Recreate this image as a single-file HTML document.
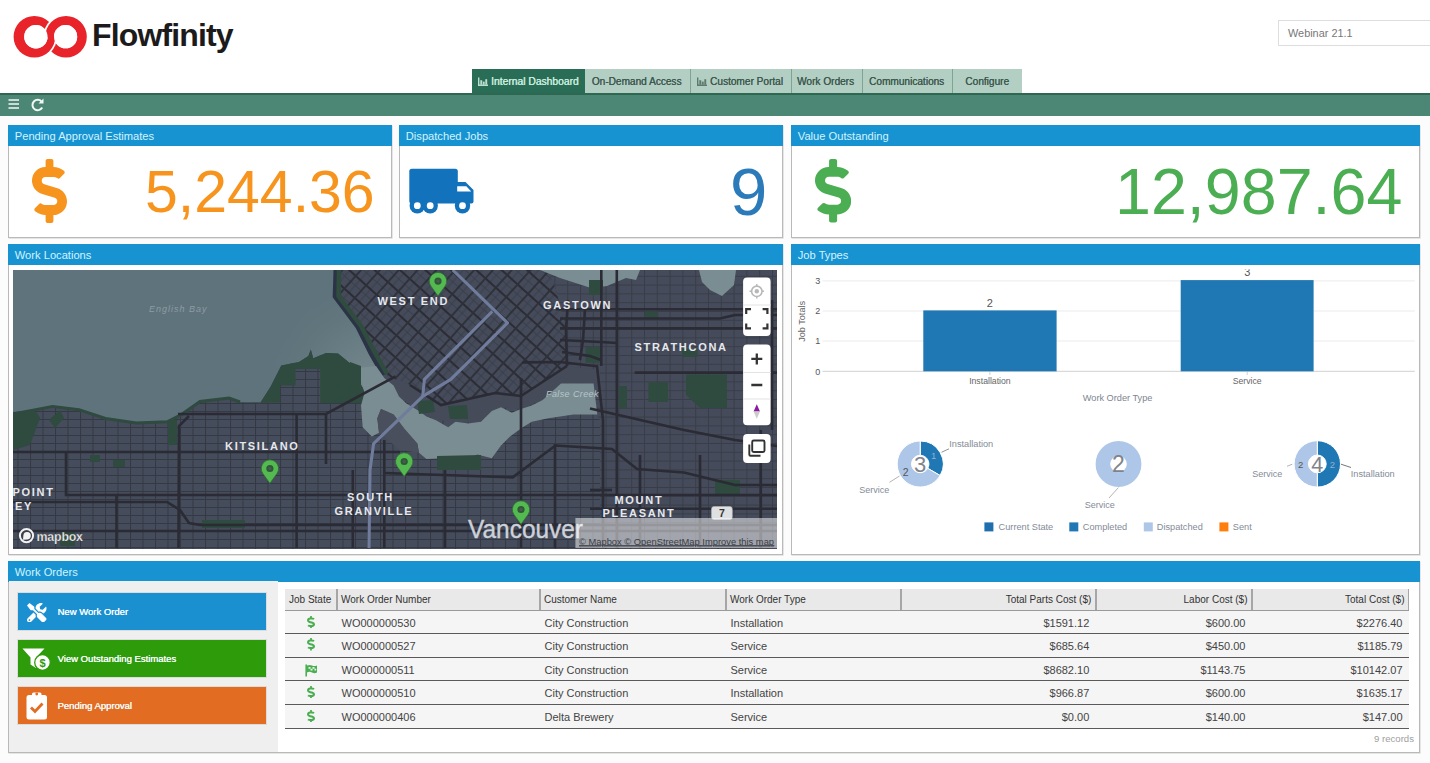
<!DOCTYPE html>
<html><head><meta charset="utf-8">
<style>
*{box-sizing:border-box;margin:0;padding:0}
html,body{width:1430px;height:763px;overflow:hidden;background:#fcfcfc;font-family:"Liberation Sans",sans-serif;position:relative}
.abs{position:absolute}
#hdr{position:absolute;left:0;top:0;width:1430px;height:93px;background:#fff}
.tab{position:absolute;top:69px;height:24px;background:#b3cfc4;border-left:1px solid #7ea493}
.tab.act{background:#2a6d57;border-left:none}
.tt{position:absolute;top:70px;line-height:24px;font-size:10.1px;color:#3d5a4f;text-shadow:0.25px 0 0 #3d5a4f;white-space:nowrap}
#bar{position:absolute;left:0;top:93px;width:1430px;height:23px;background:#4c8775;border-top:2px solid #2e6853}
.panel{position:absolute;background:#fff;border:1px solid #b9b9b9;box-shadow:0.6px 0.6px 0 #d6d6d6}
.ph{position:absolute;left:-1px;right:-1px;top:-1px;height:21px;background:#1893d2;color:#d2f3ff;font-size:11.15px;line-height:20px;padding-top:1px;padding-left:6.8px;white-space:nowrap}
.num{position:absolute;line-height:1;white-space:nowrap}
.btn{position:absolute;left:18px;width:248px;height:37px;box-shadow:0 0 0 1px #dcdcdc}
.btn span{position:absolute;left:39.5px;top:0;line-height:37px;font-size:9.5px;color:#f4fbff;text-shadow:0.15px 0 0 #fff;white-space:nowrap}
.th{position:absolute;top:589px;line-height:21px;font-size:10px;color:#333;white-space:nowrap}
.td{position:absolute;line-height:23.5px;font-size:11px;color:#444;white-space:nowrap}
.cl{position:absolute;font-size:9.1px;color:#666;white-space:nowrap;line-height:1}
</style></head><body>
<div id="hdr">
  <svg class="abs" style="left:0;top:0" width="100" height="70" viewBox="0 0 100 70">
    <defs>
      <mask id="mT" maskUnits="userSpaceOnUse" x="0" y="0" width="100" height="70"><rect width="100" height="70" fill="#fff"/><circle cx="66" cy="36.7" r="22.6" fill="#000"/><rect y="36" width="100" height="40" fill="#fff"/></mask>
      <mask id="mB" maskUnits="userSpaceOnUse" x="0" y="0" width="100" height="70"><rect width="100" height="70" fill="#fff"/><circle cx="34.4" cy="36.7" r="22.6" fill="#000"/><rect y="0" width="100" height="37.4" fill="#fff"/></mask>
    </defs>
    <path mask="url(#mT)" fill="#e8232a" fill-rule="evenodd" d="M13.6 36.7a20.8 20.8 0 1 0 41.6 0a20.8 20.8 0 1 0 -41.6 0ZM24.2 36.7a11.7 11.7 0 1 0 23.4 0a11.7 11.7 0 1 0 -23.4 0Z"/>
    <path mask="url(#mB)" fill="#e8232a" fill-rule="evenodd" d="M45.2 36.7a20.8 20.8 0 1 0 41.6 0a20.8 20.8 0 1 0 -41.6 0ZM54 36.7a11.6 11.6 0 1 0 23.2 0a11.6 11.6 0 1 0 -23.2 0Z"/>
    <circle cx="35.9" cy="36.7" r="11.7" fill="#fff"/><circle cx="65.6" cy="36.7" r="11.6" fill="#fff"/>
  </svg>
  <div class="abs" style="left:92px;top:17px;font-size:32px;font-weight:bold;color:#1c1a1b;letter-spacing:-0.85px;line-height:37px">Flowfinity</div>
  <div class="abs" style="left:1278px;top:20px;width:160px;height:26px;border:1px solid #ddd;background:#fff;font-size:10.9px;color:#777;line-height:24px;padding-left:9px">Webinar 21.1</div>
  <div class="tab act" style="left:472px;width:113px"></div>
  <div class="tab" style="left:585px;width:105px;border-left:none"></div>
  <div class="tab" style="left:690px;width:101px"></div>
  <div class="tab" style="left:791px;width:71px"></div>
  <div class="tab" style="left:862px;width:90px"></div>
  <div class="tab" style="left:952px;width:70px"></div>
  <svg class="abs" style="left:478px;top:76.5px" width="10" height="9" viewBox="0 0 10 9"><path d="M0.7 0.5V8.3H10" fill="none" stroke="#b9e0cf" stroke-width="1.4"/><rect x="2.3" y="3.2" width="1.9" height="4.5" fill="#b9e0cf"/><rect x="4.8" y="4.6" width="1.9" height="3.1" fill="#b9e0cf"/><rect x="7.3" y="2.2" width="1.9" height="5.5" fill="#b9e0cf"/></svg>
  <svg class="abs" style="left:696.5px;top:76.5px" width="10" height="9" viewBox="0 0 10 9"><path d="M0.7 0.5V8.3H10" fill="none" stroke="#5d7a6e" stroke-width="1.4"/><rect x="2.3" y="3.2" width="1.9" height="4.5" fill="#5d7a6e"/><rect x="4.8" y="4.6" width="1.9" height="3.1" fill="#5d7a6e"/><rect x="7.3" y="2.2" width="1.9" height="5.5" fill="#5d7a6e"/></svg>
  <span class="tt" style="left:491px;color:#c9ecdd;font-size:10.3px;text-shadow:0.35px 0 0 #c9ecdd">Internal Dashboard</span>
  <span class="tt" style="left:591.7px">On-Demand Access</span>
  <span class="tt" style="left:710px">Customer Portal</span>
  <span class="tt" style="left:797px">Work Orders</span>
  <span class="tt" style="left:869px">Communications</span>
  <span class="tt" style="left:965.3px">Configure</span>
</div>
<div id="bar"></div>
<svg class="abs" style="left:8px;top:98px" width="40" height="14" viewBox="0 0 40 14">
  <g stroke="#f2f7f4" stroke-width="1.6"><path d="M0.5 2H11M0.5 6H11M0.5 10H11"/></g>
  <path d="M33.6 3.6A5.2 5.2 0 1 0 34.2 9.6" fill="none" stroke="#f2f7f4" stroke-width="2"/>
  <path d="M35.5 0.6V5.6H30.5Z" fill="#f2f7f4"/>
</svg>
<div class="panel" style="left:8px;top:125px;width:384px;height:113px"><div class="ph">Pending Approval Estimates</div></div>
<div class="panel" style="left:399px;top:125px;width:384px;height:113px"><div class="ph">Dispatched Jobs</div></div>
<div class="panel" style="left:791px;top:125px;width:629px;height:113px"><div class="ph">Value Outstanding</div></div>
<svg class="abs" style="left:31.5px;top:159.3px" width="35" height="64" viewBox="0 0 288 512" preserveAspectRatio="none"><path fill="#f7941d" d="M209.2 233.4l-108-31.6C88.7 198.2 80 186.5 80 173.5c0-16.3 13.2-29.5 29.5-29.5h66.3c12.2 0 24.2 3.7 34.2 10.5 6.1 4.1 14.3 3.1 19.5-2l34.8-34c7.1-6.9 6.1-18.4-1.8-24.5C238 74.8 207.4 64.1 176 64V16c0-8.8-7.2-16-16-16h-32c-8.8 0-16 7.2-16 16v48h-2.5C45.8 64-5.4 118.7.5 183.6c4.2 46.1 39.4 83.6 83.8 96.6l102.5 30c12.5 3.7 21.2 15.3 21.2 28.3 0 16.3-13.2 29.5-29.5 29.5h-66.3C100 368 88 364.3 78 357.5c-6.1-4.1-14.3-3.1-19.5 2l-34.8 34c-7.1 6.9-6.1 18.4 1.8 24.5 24.5 19.2 55.1 29.9 86.5 30v48c0 8.8 7.2 16 16 16h32c8.8 0 16-7.2 16-16v-48.2c46.6-.9 90.3-28.6 105.7-72.7 21.5-61.6-14.6-124.8-72.5-141.7z"/></svg>
<div class="num" style="left:145px;top:162.5px;font-size:59px;color:#f7941d">5,244.36</div>
<svg class="abs" style="left:404px;top:162px" width="80" height="60" viewBox="0 0 80 60">
<g fill="#1272bc">
<rect x="5.3" y="6.8" width="48.5" height="34.6" rx="2.5"/>
<path d="M52 20.1H61.5L69.5 28V39.5Q69.5 41.4 67.6 41.4H52Z"/>
<circle cx="13.3" cy="43.7" r="7.7"/><circle cx="26.2" cy="43.7" r="7.7"/><circle cx="58.5" cy="43.7" r="7.7"/>
</g>
<g fill="#fff"><path d="M53.2 24.3H62.3L67.2 29.6H53.2Z"/>
<circle cx="13.3" cy="43.7" r="3.4"/><circle cx="26.2" cy="43.7" r="3.4"/><circle cx="58.5" cy="43.7" r="3.4"/></g>
</svg>
<div class="num" style="left:730px;top:157.5px;font-size:67px;color:#2b7bba">9</div>
<svg class="abs" style="left:815.2px;top:159.4px" width="36.2" height="63.5" viewBox="0 0 288 512" preserveAspectRatio="none"><path fill="#4cae52" d="M209.2 233.4l-108-31.6C88.7 198.2 80 186.5 80 173.5c0-16.3 13.2-29.5 29.5-29.5h66.3c12.2 0 24.2 3.7 34.2 10.5 6.1 4.1 14.3 3.1 19.5-2l34.8-34c7.1-6.9 6.1-18.4-1.8-24.5C238 74.8 207.4 64.1 176 64V16c0-8.8-7.2-16-16-16h-32c-8.8 0-16 7.2-16 16v48h-2.5C45.8 64-5.4 118.7.5 183.6c4.2 46.1 39.4 83.6 83.8 96.6l102.5 30c12.5 3.7 21.2 15.3 21.2 28.3 0 16.3-13.2 29.5-29.5 29.5h-66.3C100 368 88 364.3 78 357.5c-6.1-4.1-14.3-3.1-19.5 2l-34.8 34c-7.1 6.9-6.1 18.4 1.8 24.5 24.5 19.2 55.1 29.9 86.5 30v48c0 8.8 7.2 16 16 16h32c8.8 0 16-7.2 16-16v-48.2c46.6-.9 90.3-28.6 105.7-72.7 21.5-61.6-14.6-124.8-72.5-141.7z"/></svg>
<div class="num" style="left:1115px;top:159.5px;font-size:64.6px;color:#4cae52">12,987.64</div>
<div class="panel" style="left:8px;top:244px;width:775px;height:311px"><div class="ph">Work Locations</div></div>
<svg class="abs" style="left:13px;top:270px" width="764" height="279" viewBox="13 270 764 279">
<defs>
<pattern id="gS" patternUnits="userSpaceOnUse" x="5" y="3" width="12.5" height="8"><rect width="12.5" height="8" fill="#454c5b"/><path d="M0 0.5H12.5M0.5 0V8" stroke="#353944" stroke-width="1"/></pattern>
<pattern id="gD" patternUnits="userSpaceOnUse" width="14" height="17" patternTransform="rotate(42)"><rect width="14" height="17" fill="#454b5a"/><path d="M0 8.5H14M7 0V17" stroke="#3a3e4a" stroke-width="0.9"/><path d="M0 1H14" stroke="#2b2c35" stroke-width="2.1"/><path d="M1 0V17" stroke="#2e3039" stroke-width="1.9"/></pattern>
<pattern id="gE" patternUnits="userSpaceOnUse" x="4" y="3" width="12.8" height="8.8"><rect width="12.8" height="8.8" fill="#454b5a"/><path d="M0 0.5H12.8M0.5 0V8.8" stroke="#393d49" stroke-width="1"/></pattern>
<radialGradient id="wg" gradientUnits="userSpaceOnUse" cx="378" cy="392" r="110"><stop offset="0" stop-color="#798c91"/><stop offset="0.3" stop-color="#6e8288"/><stop offset="0.75" stop-color="#62767e"/><stop offset="1" stop-color="#5f737c"/></radialGradient>
</defs>
<rect x="13" y="270" width="764" height="279" fill="url(#gS)"/>
<polygon points="548,270 777,270 777,548 600,548 600,420 567,366 566,330 556,290" fill="url(#gE)"/>
<polygon points="334,270 548,270 556,290 566,330 567,366 521,396 495,393 441,405 410,385 387,376 371.5,353 358.3,326.5 335.7,296.3" fill="url(#gD)"/>
<polygon points="387,376 410,385 441,405 495,393 521,396 567,366 600,370 600,384 561,383.6 542.7,400 521,409 501,407.3 481,421.8 455.5,421.8 435.5,420 419,411 399,396.4 384.5,378.2" fill="#464b5a"/>
<polygon points="13,270 334,270 335.7,296.3 358.3,326.5 371.5,353 382.9,373.7 372,380 367.4,396 358,379.6 355.6,367.8 338,353.6 326.1,353 313.2,358.3 310.8,349.5 308.4,356 299,361.9 281.3,365.4 270.7,386.6 260,403.2 240,402 229,398 200,401.5 180.4,415.2 167.2,421.8 136.3,423 105.5,418.5 79,409.7 52.6,406.4 13,414" fill="url(#wg)"/>
<path d="M13,414 L52.6,406.4 L79,409.7 L105.5,418.5 L136.3,423 L167.2,421.8 L180.4,415.2 L200,401.5 L229,398 L240,402" fill="none" stroke="#2f4a3f" stroke-width="3"/>
<path d="M336.5,270 L335.7,296.3 L358.3,326.5 L371.5,353 L384,375" fill="none" stroke="#2b3446" stroke-width="6"/>
<path d="M339,270 L338.5,296 L361,326 L374.5,352 L387,374" fill="none" stroke="#2f4c3f" stroke-width="4.5"/>
<polygon points="240,402 260,403.2 270.7,386.6 281.3,365.4 299,361.9 308.4,356 310.8,349.5 313.2,358.3 326.1,353 338,353.6 355.6,367.8 358,379.6 367.4,396 362.7,403.2 322.6,403.2" fill="#2f4a3f"/>
<polygon points="295.5,369 320.2,369 320.2,412.6 280.1,412.6 280.1,385.5 295.5,385.5" fill="url(#gS)"/>
<polygon points="357,368 376,366 384.5,378.2 393.6,385.5 399,396.4 406.4,403.6 419,411 426.4,416.4 435.5,420 448.2,427.3 455.5,421.8 468.2,423.6 481,421.8 491.8,410.9 501,407.3 511.8,412.7 521,409 531.8,405.5 542.7,400 561,383.6 593.6,383.6 597.3,414.5 573.6,414.5 548.2,418.2 531.8,421.8 522.7,427.3 510,436.4 501,445.5 491.8,458.2 477.3,454.5 462.7,461.8 444.5,458.2 426.4,459 419,452.7 417.3,443.6 404.5,429 393.6,414.5 381,409 377.3,418.2 379,432.7 371.8,436.4 362.7,427.3 361,405.5 364.5,392.7 361,380" fill="#7a8d92"/>
<polygon points="381,409 393.6,414.5 404.5,429 417.3,443.6 419,452.7 400,450 379,432.7 377.3,418.2" fill="#4a4f5e"/>
<polygon points="540,270 640,270 636,280 626,278 607,286 591,288 560,278" fill="#7a8d92"/>
<polygon points="699,270 736,270 734,285 722,296 710,290 702,282" fill="#7a8d92"/>
<polygon points="417,401 433,400 435,412 419,414" fill="#2f4a3f"/>
<polygon points="448,406 467,405 468,419 450,419" fill="#2f4a3f"/>
<polygon points="437,456 481,455 481,470 437,470" fill="#2f4a3f"/>
<polygon points="585.6,347 601.3,347 601.3,362.7 585.6,362.7" fill="#2f4a3f"/>
<polygon points="589,280 603,280 603,295 589,295" fill="#2f4a3f"/>
<polygon points="686,374.5 727,374.5 727,408 700,408 686,395" fill="#2f4a3f"/>
<polygon points="648.5,382.4 668,382.4 668,402 648.5,402" fill="#2f4a3f"/>
<polygon points="644.5,311.6 658.3,311.6 658.3,317.5 644.5,317.5" fill="#2f4a3f"/>
<polygon points="682,349 697.6,349 697.6,356.8 682,356.8" fill="#2f4a3f"/>
<polygon points="619,386 627,386 627,408 619,408" fill="#2f4a3f"/>
<polygon points="202,520 245,520 245,528 202,528" fill="#2f4a3f"/>
<polygon points="13,412 35,410 40,418 30,445 13,450" fill="#2f4a3f"/>
<polygon points="90,455 100,455 100,462 90,462" fill="#2f4a3f"/>
<polygon points="113,460 125,460 125,467 113,467" fill="#2f4a3f"/>
<polygon points="168,420 177,420 177,445 168,445" fill="#2f4a3f"/>
<polygon points="49,420 60,410 64,418 55,428" fill="#2f4a3f"/>
<polygon points="60,530 75,530 75,546 60,546" fill="#2f4a3f"/>
<polygon points="715,480 740,480 740,495 715,495" fill="#2f4a3f"/>
<polygon points="350,362 361,366 361,396 350,396" fill="#2f4a3f"/>
<path d="M13,452 L400,452" fill="none" stroke="#2a2b34" stroke-width="2.6"/>
<path d="M66,452 L66,495 L777,495" fill="none" stroke="#2a2b34" stroke-width="2.6"/>
<path d="M13,502 L167,502 L180,510 L189,523 L200,525 L777,525" fill="none" stroke="#2a2b34" stroke-width="2.6"/>
<path d="M189,416 L179,426 L178.5,548" fill="none" stroke="#2a2b34" stroke-width="2.6"/>
<path d="M116.5,495 L116.5,548" fill="none" stroke="#2a2b34" stroke-width="2.6"/>
<path d="M296.6,414 L296.6,548" fill="none" stroke="#2a2b34" stroke-width="2.6"/>
<path d="M178,414 L326,414 L395.5,376.4" fill="none" stroke="#2a2b34" stroke-width="2.6"/>
<path d="M326,414 L326,464" fill="none" stroke="#2a2b34" stroke-width="2.6"/>
<path d="M384,473 L512.7,477.4 L555.5,445.5 L612,449 L637,469 L684,472.5 L735,485 L777,485" fill="none" stroke="#2a2b34" stroke-width="2.6"/>
<path d="M590,508.7 L777,508.7" fill="none" stroke="#2a2b34" stroke-width="2.6"/>
<path d="M590,490 L612,490" fill="none" stroke="#2a2b34" stroke-width="2.6"/>
<path d="M684,430 L735,440 L777,446" fill="none" stroke="#2a2b34" stroke-width="2.6"/>
<path d="M13,531 L777,531" fill="none" stroke="#2a2b34" stroke-width="2.6"/>
<path d="M521,378 L521,548" fill="none" stroke="#2a2b34" stroke-width="2.6"/>
<path d="M445,470 L445,548" fill="none" stroke="#2a2b34" stroke-width="2.6"/>
<path d="M384.3,440 L384.3,548" fill="none" stroke="#2a2b34" stroke-width="2.6"/>
<path d="M352.8,470 L352.8,548" fill="none" stroke="#2a2b34" stroke-width="2.6"/>
<path d="M410,385 L441,405 L495,393 L521,396 L567,366" fill="none" stroke="#2a2b34" stroke-width="2.6"/>
<path d="M522.4,362.4 L560,362 L597,366.3 L603,420 L603,548" fill="none" stroke="#2a2b34" stroke-width="2.6"/>
<path d="M555.8,309.3 L777,309.3" fill="none" stroke="#2a2b34" stroke-width="2.6"/>
<path d="M560,318.5 L720,318.5 L735,315 L777,315" fill="none" stroke="#2a2b34" stroke-width="2.6"/>
<path d="M634.7,372.6 L777,372.6" fill="none" stroke="#2a2b34" stroke-width="2.6"/>
<path d="M568,300 L566,330 L567,366" fill="none" stroke="#2a2b34" stroke-width="2.6"/>
<path d="M560,340 L601,342 L617,343" fill="none" stroke="#2a2b34" stroke-width="2.6"/>
<path d="M562,352 L590,356 L601,360" fill="none" stroke="#2a2b34" stroke-width="2.6"/>
<path d="M585,309 L583,340 L580,360" fill="none" stroke="#2a2b34" stroke-width="2.6"/>
<path d="M601.3,270 L601.3,366" fill="none" stroke="#2a2b34" stroke-width="2.6"/>
<path d="M560,328.4 L777,328.4" fill="none" stroke="#2a2b34" stroke-width="2.6"/>
<path d="M590,408.6 L684,430" fill="none" stroke="#2a2b34" stroke-width="2.6"/>
<path d="M616.8,270 L616.8,548" fill="none" stroke="#2a2b34" stroke-width="2.6"/>
<path d="M772,300 L772,430" fill="none" stroke="#2a2b34" stroke-width="2.6"/>
<path d="M760.8,430 L760.8,548" fill="none" stroke="#2a2b34" stroke-width="2.6"/>
<path d="M640,455 L640,548" fill="none" stroke="#2a2b34" stroke-width="2.6"/>
<path d="M700,455 L700,548" fill="none" stroke="#2a2b34" stroke-width="2.6"/>
<path d="M555,444 L555,548" fill="none" stroke="#2a2b34" stroke-width="2.6"/>
<path d="M452.7,270 L507.5,322.8 L450.8,379.4 L422.7,396.4 L373.6,443.6 L370,470 L369,548" fill="none" stroke="#6f7c9c" stroke-width="3.1" stroke-linejoin="round"/>
<path d="M492.4,311.4 L424.4,379.4 L422.7,396.4" fill="none" stroke="#6f7c9c" stroke-width="3.1" stroke-linejoin="round"/>
<text x="377.5" y="305" font-family="Liberation Sans" font-weight="bold" font-size="11" letter-spacing="1.7" fill="#e6e8ee" >WEST END</text>
<text x="543" y="309" font-family="Liberation Sans" font-weight="bold" font-size="11" letter-spacing="1.7" fill="#e6e8ee" >GASTOWN</text>
<text x="634.5" y="350.5" font-family="Liberation Sans" font-weight="bold" font-size="11" letter-spacing="1.7" fill="#e6e8ee" >STRATHCONA</text>
<text x="225" y="449.8" font-family="Liberation Sans" font-weight="bold" font-size="11" letter-spacing="1.7" fill="#e6e8ee" >KITSILANO</text>
<text x="347" y="500.8" font-family="Liberation Sans" font-weight="bold" font-size="11" letter-spacing="1.7" fill="#e6e8ee" >SOUTH</text>
<text x="334.5" y="514.8" font-family="Liberation Sans" font-weight="bold" font-size="11" letter-spacing="1.7" fill="#e6e8ee" >GRANVILLE</text>
<text x="614.5" y="503.5" font-family="Liberation Sans" font-weight="bold" font-size="11" letter-spacing="1.7" fill="#e6e8ee" >MOUNT</text>
<text x="602.5" y="517" font-family="Liberation Sans" font-weight="bold" font-size="11" letter-spacing="1.7" fill="#e6e8ee" >PLEASANT</text>
<text x="12.5" y="495.8" font-family="Liberation Sans" font-weight="bold" font-size="11" letter-spacing="1.7" fill="#e6e8ee" >POINT</text>
<text x="-5" y="510" font-family="Liberation Sans" font-weight="bold" font-size="11" letter-spacing="1.7" fill="#e6e8ee" >GREY</text>
<text x="149" y="311.5" font-family="Liberation Sans" font-style="italic" font-size="9" letter-spacing="1" fill="#8c9ca4">English Bay</text>
<text x="546" y="396.5" font-family="Liberation Sans" font-style="italic" font-size="9" letter-spacing="0.4" fill="#b9c5c9">False Creek</text>
<g transform="translate(438,281.09999999999997)"><path d="M0,14.9 L-7.07,5.08 A8.7,8.7 0 1 1 7.07,5.08 Z" fill="#55b952" stroke="#2f6a36" stroke-width="0.8"/><circle r="3.6" fill="#2d5a35"/><circle r="1.7" fill="#4a5a55"/></g>
<g transform="translate(269.9,468.5)"><path d="M0,14.9 L-7.07,5.08 A8.7,8.7 0 1 1 7.07,5.08 Z" fill="#55b952" stroke="#2f6a36" stroke-width="0.8"/><circle r="3.6" fill="#2d5a35"/><circle r="1.7" fill="#4a5a55"/></g>
<g transform="translate(404.2,461.5)"><path d="M0,14.9 L-7.07,5.08 A8.7,8.7 0 1 1 7.07,5.08 Z" fill="#55b952" stroke="#2f6a36" stroke-width="0.8"/><circle r="3.6" fill="#2d5a35"/><circle r="1.7" fill="#4a5a55"/></g>
<g transform="translate(521,509.5)"><path d="M0,14.9 L-7.07,5.08 A8.7,8.7 0 1 1 7.07,5.08 Z" fill="#55b952" stroke="#2f6a36" stroke-width="0.8"/><circle r="3.6" fill="#2d5a35"/><circle r="1.7" fill="#4a5a55"/></g>
<text x="468" y="537.5" font-family="Liberation Sans" font-size="26" textLength="115" lengthAdjust="spacingAndGlyphs" fill="#cdd1da" stroke="#cdd1da" stroke-width="0.4">Vancouver</text>
<rect x="711.5" y="506.5" width="20.8" height="13" rx="2.5" fill="#dfe0e2" stroke="#bbb" stroke-width="0.5"/>
<text x="721.9" y="517.2" font-family="Liberation Sans" font-weight="bold" font-size="10.5" text-anchor="middle" fill="#333">7</text>
<rect x="575.4" y="518" width="202" height="30" fill="#ffffff" fill-opacity="0.5"/>
<text x="579" y="544.5" font-family="Liberation Sans" font-size="9.35" fill="#3a3d44" text-decoration="underline">© Mapbox © OpenStreetMap Improve this map</text>
<path d="M579 545.5H774.5" stroke="#3a3d44" stroke-width="0.6"/>
<circle cx="26.5" cy="535.6" r="6.6" fill="#3a3f4a" stroke="#f2f2f2" stroke-width="2"/>
<path d="M23 539.8 L23.4 535.2 A3.7 3.7 0 1 1 27.6 539.4 Z" fill="#f2f2f2"/>
<text x="36.5" y="540.6" font-family="Liberation Sans" font-weight="bold" font-size="12.4" letter-spacing="-0.2" fill="#eeeeee" stroke="#444" stroke-width="0.25">mapbox</text>
<rect x="743.1" y="277.6" width="27.5" height="58.5" rx="4" fill="#fff"/>
<rect x="743.1" y="344.6" width="27.5" height="80.69999999999999" rx="4" fill="#fff"/>
<rect x="743.1" y="434" width="27.5" height="29" rx="4" fill="#fff"/>
<path d="M743.1 305H770.6M743.1 372.5H770.6M743.1 399H770.6" stroke="#e3e3e3" stroke-width="1"/>
<circle cx="756.8" cy="291.3" r="5.2" fill="none" stroke="#b8b8b8" stroke-width="1.6"/><circle cx="756.8" cy="291.3" r="2.2" fill="#b8b8b8"/><path d="M756.8 284V286M756.8 296.5V298.5M749.5 291.3H751.5M762 291.3H764" stroke="#b8b8b8" stroke-width="1.4"/>
<path d="M746.2 314V309.2H751M762.6 309.2H767.4V314M767.4 323.5V328.3H762.6M751 328.3H746.2V323.5" fill="none" stroke="#333" stroke-width="2.2"/>
<path d="M751.3 358.9H762.3M756.8 353.4V364.4M751.3 385H762.3" stroke="#333" stroke-width="2.3"/>
<path d="M756.8 404.2L760 411.5H753.6Z" fill="#8a1aa0"/><path d="M756.8 418.8L760 411.5H753.6Z" fill="#ccc"/>
<rect x="752.2" y="440.5" width="12.3" height="11.5" rx="1.5" fill="#fff" stroke="#333" stroke-width="1.9"/>
<path d="M749.3 444.5V454.5Q749.3 455.8 750.6 455.8H760.5" fill="none" stroke="#333" stroke-width="1.9"/>
</svg>
<div class="panel" style="left:791px;top:244px;width:629px;height:311px"><div class="ph">Job Types</div></div>
<svg class="abs" style="left:792px;top:265px" width="628" height="289" viewBox="792 265 628 289">
<defs><clipPath id="cc"><rect x="792" y="269.6" width="628" height="290"/></clipPath></defs>
<path d="M822.5 280.9H1414.8" stroke="#ebebeb" stroke-width="1"/>
<path d="M822.5 311H1414.8" stroke="#ebebeb" stroke-width="1"/>
<path d="M822.5 341H1414.8" stroke="#ebebeb" stroke-width="1"/>
<path d="M822.5 371.3H1414.8" stroke="#d0d0d0" stroke-width="1"/>
<path d="M989.9 371.3V375M1247.2 371.3V375" stroke="#d0d0d0" stroke-width="1"/>
<text x="820.3" y="284.09999999999997" font-family="Liberation Sans" font-size="9" text-anchor="end" fill="#555">3</text>
<text x="820.3" y="314.2" font-family="Liberation Sans" font-size="9" text-anchor="end" fill="#555">2</text>
<text x="820.3" y="344.2" font-family="Liberation Sans" font-size="9" text-anchor="end" fill="#555">1</text>
<text x="820.3" y="374.5" font-family="Liberation Sans" font-size="9" text-anchor="end" fill="#555">0</text>
<text transform="translate(805.2 321.4) rotate(-90)" font-family="Liberation Sans" font-size="9.15" text-anchor="middle" fill="#666">Job Totals</text>
<rect x="923.3" y="310.4" width="133.3" height="60.9" fill="#1f77b4"/>
<rect x="1180.7" y="280.1" width="132.9" height="91.2" fill="#1f77b4"/>
<text x="989.9" y="307.4" font-family="Liberation Sans" font-size="11" text-anchor="middle" fill="#555">2</text>
<g clip-path="url(#cc)"><text x="1247.2" y="276.2" font-family="Liberation Sans" font-size="11" text-anchor="middle" fill="#555">3</text></g>
<text x="989.9" y="384.3" font-family="Liberation Sans" font-size="8.7" text-anchor="middle" fill="#666">Installation</text>
<text x="1247.2" y="384.3" font-family="Liberation Sans" font-size="8.7" text-anchor="middle" fill="#666">Service</text>
<text x="1117.6" y="401.4" font-family="Liberation Sans" font-size="9.2" text-anchor="middle" fill="#7d8590">Work Order Type</text>
<path d="M920.20,441.00 A23,23 0 0 1 940.12,475.50 L927.73,468.35 A8.7,8.7 0 0 0 920.20,455.30Z" fill="#1f77b4" stroke="#fff" stroke-width="1"/>
<path d="M940.12,475.50 A23,23 0 1 1 920.20,441.00 L920.20,455.30 A8.7,8.7 0 1 0 927.73,468.35Z" fill="#aec7e8" stroke="#fff" stroke-width="1"/>
<text x="920.2" y="471.9" font-family="Liberation Sans" font-size="22" text-anchor="middle" fill="#7f848c">3</text>
<text x="933.6" y="458.6" font-family="Liberation Sans" font-size="9.5" text-anchor="middle" fill="#8fb0d2">1</text>
<text x="905.6" y="476.2" font-family="Liberation Sans" font-size="10.5" text-anchor="middle" fill="#555">2</text>
<text x="949.3" y="446.5" font-family="Liberation Sans" font-size="9.2" fill="#838b97">Installation</text>
<path d="M941.5 452.3L949 448.8" stroke="#888" stroke-width="0.9"/>
<text x="859.2" y="492.8" font-family="Liberation Sans" font-size="9" fill="#838b97">Service</text>
<path d="M889.5 482.3L899.5 476" stroke="#aaa" stroke-width="0.9"/>
<circle cx="1118.5" cy="464" r="15.6" fill="none" stroke="#aec7e8" stroke-width="14.6"/>
<text x="1118.5" y="472.4" font-family="Liberation Sans" font-size="23" text-anchor="middle" fill="#7f848c">2</text>
<text x="1084.8" y="508" font-family="Liberation Sans" font-size="9" fill="#838b97">Service</text>
<path d="M1118.4 487.6L1109 498" stroke="#aaa" stroke-width="0.9"/>
<path d="M1317.30,440.70 A23.2,23.2 0 0 1 1317.30,487.10 L1317.30,472.80 A8.9,8.9 0 0 0 1317.30,455.00Z" fill="#1f77b4" stroke="#fff" stroke-width="1"/>
<path d="M1317.30,487.10 A23.2,23.2 0 0 1 1317.30,440.70 L1317.30,455.00 A8.9,8.9 0 0 0 1317.30,472.80Z" fill="#aec7e8" stroke="#fff" stroke-width="1"/>
<text x="1317.3" y="471.59999999999997" font-family="Liberation Sans" font-size="21.5" text-anchor="middle" fill="#7f848c">4</text>
<text x="1300.7" y="467.9" font-family="Liberation Sans" font-size="9.5" text-anchor="middle" fill="#555">2</text>
<text x="1332.5" y="467.9" font-family="Liberation Sans" font-size="9.5" text-anchor="middle" fill="#8fb0d2">2</text>
<text x="1252.3" y="477.2" font-family="Liberation Sans" font-size="9" fill="#838b97">Service</text>
<path d="M1292.3 464.2L1287 466.3" stroke="#aaa" stroke-width="0.9"/>
<text x="1350.8" y="477.2" font-family="Liberation Sans" font-size="9.2" fill="#838b97">Installation</text>
<path d="M1341 464.2L1351 467.5" stroke="#666" stroke-width="0.9"/>
<rect x="984.4" y="522.4" width="9" height="9" fill="#1f6fae"/>
<text x="998.6" y="529.8" font-family="Liberation Sans" font-size="9.2" fill="#838b97">Current State</text>
<rect x="1069.3" y="522.4" width="9" height="9" fill="#1f77b4"/>
<text x="1082.8" y="529.8" font-family="Liberation Sans" font-size="9.2" fill="#838b97">Completed</text>
<rect x="1143.8" y="522.4" width="9" height="9" fill="#aec7e8"/>
<text x="1156.8" y="529.8" font-family="Liberation Sans" font-size="9.2" fill="#838b97">Dispatched</text>
<rect x="1219.4" y="522.4" width="9" height="9" fill="#ff7f0e"/>
<text x="1232.8" y="529.8" font-family="Liberation Sans" font-size="9.2" fill="#838b97">Sent</text>
</svg>
<div class="panel" style="left:8px;top:561px;width:1412px;height:192px"><div class="ph">Work Orders</div></div>
<div class="abs" style="left:9px;top:581px;width:269px;height:171px;background:#efefef"></div>
<div class="btn" style="top:593px;background:#1a90d1"><span>New Work Order</span></div>
<div class="btn" style="top:640px;background:#2e9b0b"><span>View Outstanding Estimates</span></div>
<div class="btn" style="top:687px;background:#e26d22"><span>Pending Approval</span></div>
<svg class="abs" style="left:27px;top:602.5px" width="19.5" height="19.5" viewBox="0 0 512 512"><path fill="#fff" d="M501.1 395.7L384 278.6c-23.1-23.1-57.6-27.6-85.4-13.9L192 158.1V96L64 0 0 64l96 128h62.1l106.6 106.6c-13.6 27.8-9.2 62.3 13.9 85.4l117.1 117.1c14.6 14.6 38.2 14.6 52.7 0l52.7-52.7c14.5-14.6 14.5-38.2 0-52.7zM331.7 225c28.3 0 54.9 11 74.9 31l19.4 19.4c15.8-6.9 30.8-16.5 43.8-29.5 37.1-37.1 49.7-89.300 37.9-136.7-2.2-9-13.5-12.1-20.1-5.5l-74.4 74.4-67.9-11.3L334 98.9l74.4-74.4c6.6-6.6 3.4-17.9-5.7-20.2-47.4-11.7-99.6.9-136.6 37.9-28.5 28.5-41.9 66.1-41.2 103.6l82.1 82.1c8.1-1.9 16.5-2.9 24.7-2.9zm-103.9 82l-56.7-56.7L18.7 402.8c-25 25-25 65.5 0 90.5s65.5 25 90.5 0l123.6-123.6c-7.600-19.9-9.9-41.6-5-62.7zM64 472c-13.2 0-24-10.8-24-24 0-13.3 10.700-24 24-24s24 10.7 24 24c0 13.2-10.7 24-24 24z"/></svg>
<svg class="abs" style="left:22px;top:648px" width="29" height="23" viewBox="0 0 29 23">
<path d="M0.5 0.5H22.5L14 9.5V20L8.5 16.5V9.5Z" fill="#fff"/>
<circle cx="20.5" cy="14.5" r="7.8" fill="#fff" stroke="#2e9b0b" stroke-width="1.3"/>
<text x="20.5" y="18.6" font-family="Liberation Sans" font-weight="bold" font-size="11" text-anchor="middle" fill="#2e9b0b">$</text>
</svg>
<svg class="abs" style="left:26px;top:691px" width="22" height="29" viewBox="0 0 22 29">
<rect x="0.5" y="4" width="20.5" height="24.5" rx="2.5" fill="#fff"/>
<rect x="6" y="1.5" width="9.5" height="5" rx="1.5" fill="#fff"/>
<circle cx="10.75" cy="3" r="1.4" fill="#e26d22"/>
<path d="M5 16.5L9 20.5L16.5 12.5" fill="none" stroke="#e26d22" stroke-width="2.8"/>
</svg>
<div class="abs" style="left:285px;top:589px;width:1124px;height:22px;background:#e9e9e9;border-bottom:1px solid #9a9a9a"></div>
<div class="th" style="left:289px">Job State</div>
<div class="abs" style="left:336px;top:589px;width:2px;height:21px;background:#a6a6a6"></div>
<div class="th" style="left:341px">Work Order Number</div>
<div class="abs" style="left:539px;top:589px;width:2px;height:21px;background:#a6a6a6"></div>
<div class="th" style="left:544px">Customer Name</div>
<div class="abs" style="left:725px;top:589px;width:2px;height:21px;background:#a6a6a6"></div>
<div class="th" style="left:730px">Work Order Type</div>
<div class="abs" style="left:899.6px;top:589px;width:2px;height:21px;background:#a6a6a6"></div>
<div class="th" style="left:900.6px;width:190.69999999999993px;text-align:right">Total Parts Cost ($)</div>
<div class="abs" style="left:1094.8px;top:589px;width:2px;height:21px;background:#a6a6a6"></div>
<div class="th" style="left:1095.8px;width:151.70000000000005px;text-align:right">Labor Cost ($)</div>
<div class="abs" style="left:1251px;top:589px;width:2px;height:21px;background:#a6a6a6"></div>
<div class="th" style="left:1252px;width:152.5px;text-align:right">Total Cost ($)</div>
<div class="abs" style="left:1408px;top:589px;width:1px;height:21px;background:#a6a6a6"></div>
<div class="abs" style="left:285px;top:611px;width:1124px;height:22.5px;background:#f5f5f5;border-bottom:1px solid #5a5a5a"></div>
<svg class="abs" style="left:306.8px;top:615.5px" width="8" height="12.6" viewBox="0 0 288 512" preserveAspectRatio="none"><path fill="#4cae52" d="M209.2 233.4l-108-31.6C88.7 198.2 80 186.5 80 173.5c0-16.3 13.2-29.5 29.5-29.5h66.3c12.2 0 24.2 3.7 34.2 10.5 6.1 4.1 14.3 3.1 19.5-2l34.8-34c7.1-6.9 6.1-18.4-1.8-24.5C238 74.8 207.4 64.1 176 64V16c0-8.8-7.2-16-16-16h-32c-8.8 0-16 7.2-16 16v48h-2.5C45.8 64-5.4 118.7.5 183.6c4.2 46.1 39.4 83.6 83.8 96.6l102.5 30c12.5 3.7 21.2 15.3 21.2 28.3 0 16.3-13.2 29.5-29.5 29.5h-66.3C100 368 88 364.3 78 357.5c-6.1-4.1-14.3-3.1-19.5 2l-34.8 34c-7.1 6.9-6.1 18.4 1.8 24.5 24.5 19.2 55.1 29.9 86.5 30v48c0 8.8 7.2 16 16 16h32c8.8 0 16-7.2 16-16v-48.2c46.6-.9 90.3-28.6 105.7-72.7 21.5-61.6-14.6-124.8-72.5-141.7z"/></svg>
<div class="td" style="left:341.5px;top:612px">WO000000530</div>
<div class="td" style="left:544.5px;top:612px">City Construction</div>
<div class="td" style="left:730.5px;top:612px">Installation</div>
<div class="td" style="left:900.6px;top:612px;width:188.69999999999993px;text-align:right">$1591.12</div>
<div class="td" style="left:1095.8px;top:612px;width:149.70000000000005px;text-align:right">$600.00</div>
<div class="td" style="left:1252px;top:612px;width:150.5px;text-align:right">$2276.40</div>
<div class="abs" style="left:285px;top:633.5px;width:1124px;height:24.0px;background:#f5f5f5;border-bottom:1px solid #5a5a5a"></div>
<svg class="abs" style="left:306.8px;top:638.0px" width="8" height="12.6" viewBox="0 0 288 512" preserveAspectRatio="none"><path fill="#4cae52" d="M209.2 233.4l-108-31.6C88.7 198.2 80 186.5 80 173.5c0-16.3 13.2-29.5 29.5-29.5h66.3c12.2 0 24.2 3.7 34.2 10.5 6.1 4.1 14.3 3.1 19.5-2l34.8-34c7.1-6.9 6.1-18.4-1.8-24.5C238 74.8 207.4 64.1 176 64V16c0-8.8-7.2-16-16-16h-32c-8.8 0-16 7.2-16 16v48h-2.5C45.8 64-5.4 118.7.5 183.6c4.2 46.1 39.4 83.6 83.8 96.6l102.5 30c12.5 3.7 21.2 15.3 21.2 28.3 0 16.3-13.2 29.5-29.5 29.5h-66.3C100 368 88 364.3 78 357.5c-6.1-4.1-14.3-3.1-19.5 2l-34.8 34c-7.1 6.9-6.1 18.4 1.8 24.5 24.5 19.2 55.1 29.9 86.5 30v48c0 8.8 7.2 16 16 16h32c8.8 0 16-7.2 16-16v-48.2c46.6-.9 90.3-28.6 105.7-72.7 21.5-61.6-14.6-124.8-72.5-141.7z"/></svg>
<div class="td" style="left:341.5px;top:634.5px">WO000000527</div>
<div class="td" style="left:544.5px;top:634.5px">City Construction</div>
<div class="td" style="left:730.5px;top:634.5px">Service</div>
<div class="td" style="left:900.6px;top:634.5px;width:188.69999999999993px;text-align:right">$685.64</div>
<div class="td" style="left:1095.8px;top:634.5px;width:149.70000000000005px;text-align:right">$450.00</div>
<div class="td" style="left:1252px;top:634.5px;width:150.5px;text-align:right">$1185.79</div>
<div class="abs" style="left:285px;top:657.5px;width:1124px;height:23.5px;background:#f5f5f5;border-bottom:1px solid #5a5a5a"></div>
<svg class="abs" style="left:305px;top:663.5px" width="13" height="13" viewBox="0 0 13 13"><path d="M1.2 0.5V12.5" stroke="#4cae52" stroke-width="1.6"/><path d="M2 1.5Q5 0.3 7 1.5T12 1.5V8.5Q9.5 9.8 7 8.5T2 8.5Z" fill="#4cae52"/><path d="M3.5 3H5.5V4.8H3.5ZM7.5 3H9.5V4.8H7.5ZM5.5 4.8H7.5V6.6H5.5ZM9.5 4.8H11.2V6.6H9.5Z" fill="#e8f5e9"/></svg>
<div class="td" style="left:341.5px;top:658.5px">WO000000511</div>
<div class="td" style="left:544.5px;top:658.5px">City Construction</div>
<div class="td" style="left:730.5px;top:658.5px">Service</div>
<div class="td" style="left:900.6px;top:658.5px;width:188.69999999999993px;text-align:right">$8682.10</div>
<div class="td" style="left:1095.8px;top:658.5px;width:149.70000000000005px;text-align:right">$1143.75</div>
<div class="td" style="left:1252px;top:658.5px;width:150.5px;text-align:right">$10142.07</div>
<div class="abs" style="left:285px;top:681px;width:1124px;height:24px;background:#f5f5f5;border-bottom:1px solid #5a5a5a"></div>
<svg class="abs" style="left:306.8px;top:685.5px" width="8" height="12.6" viewBox="0 0 288 512" preserveAspectRatio="none"><path fill="#4cae52" d="M209.2 233.4l-108-31.6C88.7 198.2 80 186.5 80 173.5c0-16.3 13.2-29.5 29.5-29.5h66.3c12.2 0 24.2 3.7 34.2 10.5 6.1 4.1 14.3 3.1 19.5-2l34.8-34c7.1-6.9 6.1-18.4-1.8-24.5C238 74.8 207.4 64.1 176 64V16c0-8.8-7.2-16-16-16h-32c-8.8 0-16 7.2-16 16v48h-2.5C45.8 64-5.4 118.7.5 183.6c4.2 46.1 39.4 83.6 83.8 96.6l102.5 30c12.5 3.7 21.2 15.3 21.2 28.3 0 16.3-13.2 29.5-29.5 29.5h-66.3C100 368 88 364.3 78 357.5c-6.1-4.1-14.3-3.1-19.5 2l-34.8 34c-7.1 6.9-6.1 18.4 1.8 24.5 24.5 19.2 55.1 29.9 86.5 30v48c0 8.8 7.2 16 16 16h32c8.8 0 16-7.2 16-16v-48.2c46.6-.9 90.3-28.6 105.7-72.7 21.5-61.6-14.6-124.8-72.5-141.7z"/></svg>
<div class="td" style="left:341.5px;top:682px">WO000000510</div>
<div class="td" style="left:544.5px;top:682px">City Construction</div>
<div class="td" style="left:730.5px;top:682px">Installation</div>
<div class="td" style="left:900.6px;top:682px;width:188.69999999999993px;text-align:right">$966.87</div>
<div class="td" style="left:1095.8px;top:682px;width:149.70000000000005px;text-align:right">$600.00</div>
<div class="td" style="left:1252px;top:682px;width:150.5px;text-align:right">$1635.17</div>
<div class="abs" style="left:285px;top:705px;width:1124px;height:23.5px;background:#f5f5f5;border-bottom:1px solid #5a5a5a"></div>
<svg class="abs" style="left:306.8px;top:709.5px" width="8" height="12.6" viewBox="0 0 288 512" preserveAspectRatio="none"><path fill="#4cae52" d="M209.2 233.4l-108-31.6C88.7 198.2 80 186.5 80 173.5c0-16.3 13.2-29.5 29.5-29.5h66.3c12.2 0 24.2 3.7 34.2 10.5 6.1 4.1 14.3 3.1 19.5-2l34.8-34c7.1-6.9 6.1-18.4-1.8-24.5C238 74.8 207.4 64.1 176 64V16c0-8.8-7.2-16-16-16h-32c-8.8 0-16 7.2-16 16v48h-2.5C45.8 64-5.4 118.7.5 183.6c4.2 46.1 39.4 83.6 83.8 96.6l102.5 30c12.5 3.7 21.2 15.3 21.2 28.3 0 16.3-13.2 29.5-29.5 29.5h-66.3C100 368 88 364.3 78 357.5c-6.1-4.1-14.3-3.1-19.5 2l-34.8 34c-7.1 6.9-6.1 18.4 1.8 24.5 24.5 19.2 55.1 29.9 86.5 30v48c0 8.8 7.2 16 16 16h32c8.8 0 16-7.2 16-16v-48.2c46.6-.9 90.3-28.6 105.7-72.7 21.5-61.6-14.6-124.8-72.5-141.7z"/></svg>
<div class="td" style="left:341.5px;top:706px">WO000000406</div>
<div class="td" style="left:544.5px;top:706px">Delta Brewery</div>
<div class="td" style="left:730.5px;top:706px">Service</div>
<div class="td" style="left:900.6px;top:706px;width:188.69999999999993px;text-align:right">$0.00</div>
<div class="td" style="left:1095.8px;top:706px;width:149.70000000000005px;text-align:right">$140.00</div>
<div class="td" style="left:1252px;top:706px;width:150.5px;text-align:right">$147.00</div>
<div class="abs" style="left:1374px;top:733px;font-size:9.6px;color:#a0a0a0;line-height:12px;white-space:nowrap">9 records</div>
</body></html>
